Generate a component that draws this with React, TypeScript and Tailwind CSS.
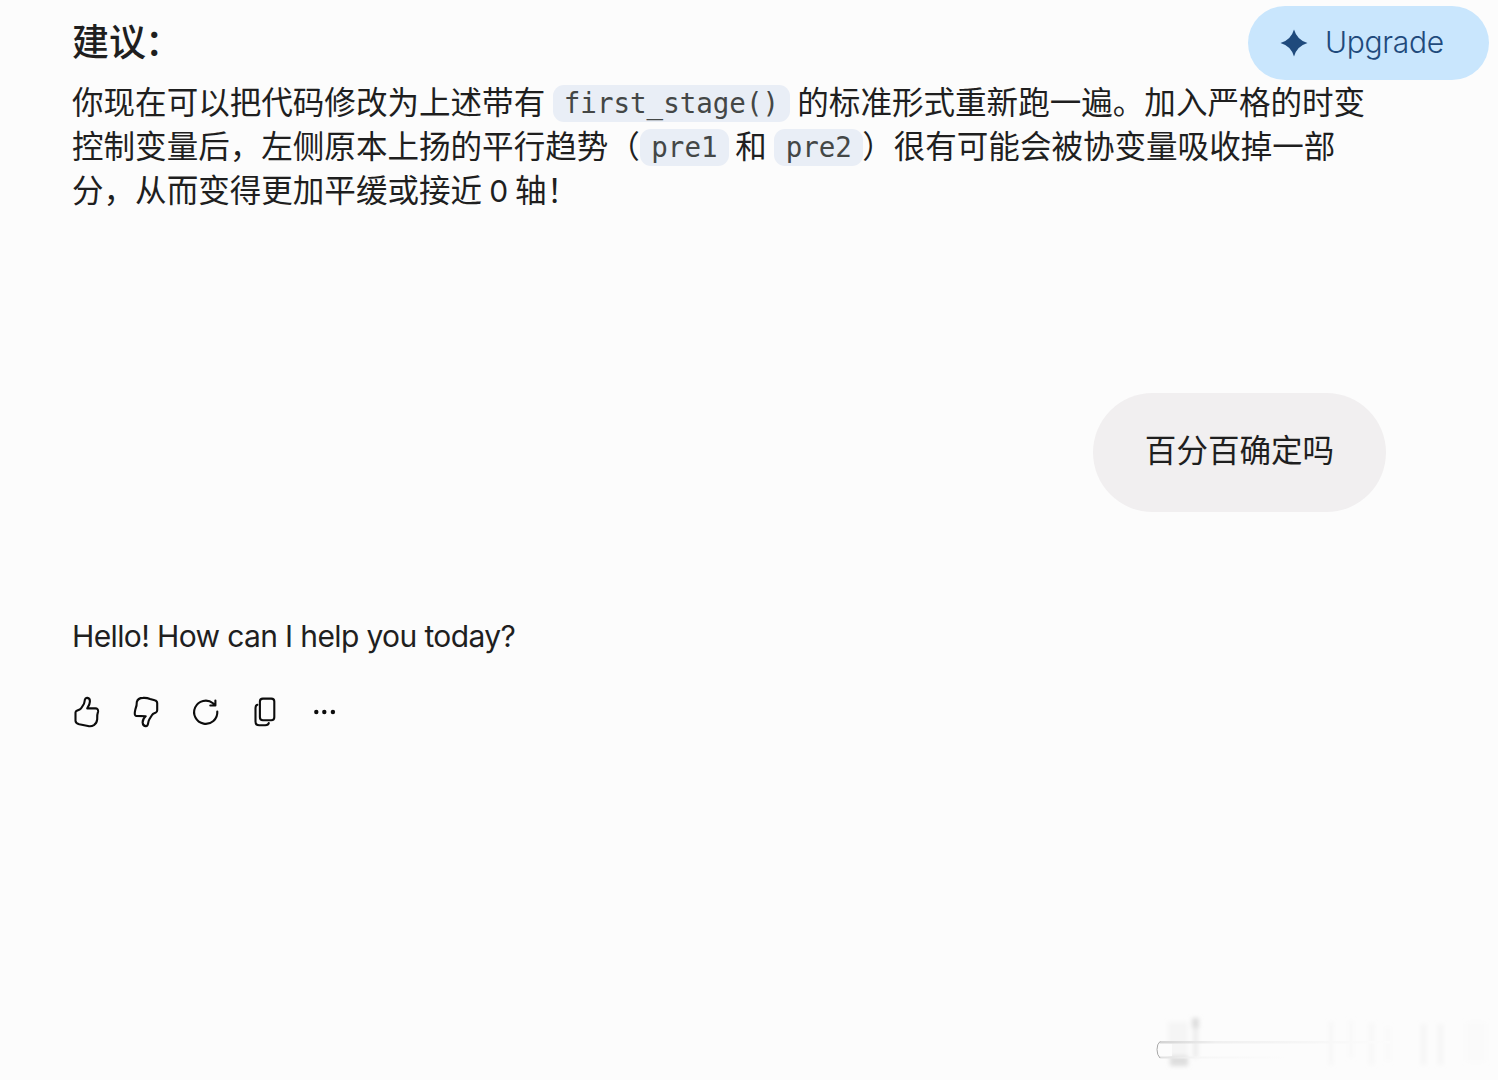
import type { ReactNode } from "react";

const Code = ({ children }: { children: ReactNode }) => (
  <code className="inline-flex h-[37px] shrink-0 items-center rounded-[11px] bg-[#e9eef6] px-[11.3px] pt-px font-['DejaVu_Sans_Mono',monospace] text-[27.5px] leading-none text-[#444746]">
    {children}
  </code>
);

const Line = ({ children }: { children: ReactNode }) => (
  <span className="flex h-[44.3px] items-center whitespace-nowrap">{children}</span>
);

const Text = ({ children, width = "" }: { children: ReactNode; width?: string }) => (
  <span className={`shrink-0 pb-[5px] ${width}`}>{children}</span>
);

const iconProps = {
  fill: "none",
  stroke: "#0c0c0c",
  strokeWidth: 2.1,
  strokeLinecap: "round" as const,
  strokeLinejoin: "round" as const,
};

const ThumbUp = () => (
  <svg width="30" height="34" viewBox="72 695 30 34" {...iconProps}>
    <path d="M75.5 712.5Q75.6 711.2 76.8 710.7L79.6 709.5Q80.8 708.9 81.5 707.8L83.7 704.2Q84.2 703.3 84.4 702.1L84.9 699.6Q85.4 697.7 87.3 697.9Q90.2 698.3 89.9 701.6Q89.8 704.8 87.2 708.4H95.4Q98.2 708.4 98.1 711.4Q96.9 714.8 97.2 719.4Q96.7 723.4 93.9 725.2Q91.1 726.8 88 726L79.2 724.3Q75.5 723.3 75.5 720.7Z" />
  </svg>
);

const ThumbDown = () => (
  <svg width="30" height="34" viewBox="131.6 695 30 34" {...iconProps}>
    <path d="M157.8 703.2Q157.8 700.8 155.3 700.2L150.7 698.9Q147.4 697.6 143.6 697.9Q138.4 698 137.4 702.1Q137.6 705 135.9 709.7Q134.4 715.4 136.7 715.9L146.3 716.2Q143.2 718.8 143.2 722.4Q143.5 726.2 146.5 726.1Q148.3 726 148.7 723.3Q149.1 720.7 150 719.2L152.8 714.8Q153.5 713.8 154.8 713.3L156.4 712.6Q157.8 712 157.8 710.3Z" />
  </svg>
);

const Redo = () => (
  <svg width="30" height="34" viewBox="191 695 30 34" {...iconProps}>
    <path d="M217.3 711.5A11.6 11.6 0 1 1 213 703.2L215.2 705.4M215.4 700.5V705.5H210.3" />
  </svg>
);

const Copy = () => (
  <svg width="30" height="34" viewBox="250.4 695 30 34" {...iconProps}>
    <rect x="260.3" y="698.6" width="14.4" height="21.6" rx="3" />
    <path d="M257.8 704.8Q255.9 705.4 255.9 708V721.4Q255.9 725.2 259.6 725.2H265.6Q268.8 725.2 269.2 723" />
  </svg>
);

const More = () => (
  <svg width="30" height="34" viewBox="309.9 695 30 34" fill="#0c0c0c">
    <circle cx="316.2" cy="712" r="2.2" />
    <circle cx="324.2" cy="712" r="2.2" />
    <circle cx="332.8" cy="712" r="2.2" />
  </svg>
);

const Smudge = () => (
  <svg className="absolute right-0 bottom-0" width="348" height="70" viewBox="1150 1010 348 70" fill="none">
    <defs>
      <linearGradient id="fade" x1="1158" x2="1390" y1="0" y2="0" gradientUnits="userSpaceOnUse">
        <stop stopColor="#d2d2d2" />
        <stop offset=".25" stopColor="#f0f0f0" />
        <stop offset="1" stopColor="#fcfcfc" />
      </linearGradient>
      <linearGradient id="fade-low" x1="1158" x2="1290" y1="0" y2="0" gradientUnits="userSpaceOnUse">
        <stop stopColor="#dedede" />
        <stop offset=".3" stopColor="#f6f6f6" />
        <stop offset="1" stopColor="#fcfcfc" />
      </linearGradient>
      <filter id="soft" x="-50%" y="-50%" width="200%" height="200%">
        <feGaussianBlur stdDeviation="2.2" />
      </filter>
    </defs>
    <g filter="url(#soft)">
      <rect x="1168" y="1022" width="20" height="38" fill="#f5f5f5" />
      <rect x="1192" y="1018" width="7" height="10" fill="#dedede" />
      <rect x="1193" y="1028" width="5" height="30" fill="#ececec" />
      <rect x="1170" y="1056" width="18" height="10" fill="#dedede" />
      <rect x="1329" y="1022" width="4" height="43" fill="#f6f6f6" />
      <rect x="1349" y="1020" width="4" height="38" fill="#f8f8f8" />
      <rect x="1369" y="1023" width="5" height="42" fill="#f7f7f7" />
      <rect x="1386" y="1026" width="4" height="36" fill="#f9f9f9" />
      <rect x="1421" y="1024" width="5" height="41" fill="#f5f5f5" />
      <rect x="1438" y="1024" width="5" height="41" fill="#f5f5f5" />
      <rect x="1466" y="1022" width="20" height="40" fill="#fafafa" />
    </g>
    <rect x="1160" y="1041" width="230" height="2.5" fill="url(#fade)" />
    <rect x="1160" y="1056.5" width="130" height="2" fill="url(#fade-low)" />
    <path d="M1160 1041.5Q1157 1044 1157 1049.5T1160 1058" stroke="#a8a8a8" />
    <path d="M1162 1044H1172V1056H1162Q1159 1050 1162 1044Z" fill="#fcfcfc" />
  </svg>
);

export default function App() {
  return (
    <main className="relative flex h-[1080px] w-[1498px] flex-col overflow-hidden bg-[#fcfcfc] pl-[72px] font-['Noto_Sans_CJK_SC',sans-serif] text-[31.55px] text-[#1f1f1f]">
      <h3 className="mt-[18px] flex h-[44px] items-center text-[37px] leading-none font-medium">
        建议<span className="-ml-px">：</span>
      </h3>
      <p className="mt-[19px] flex flex-col leading-none">
        <Line>
          <Text width="w-[480.5px]">你现在可以把代码修改为上述带有</Text>
          <Code>first_stage()</Code>
          <span className="ml-[7px] pb-[5px]">的标准形式重新跑一遍。加入严格的时变</span>
        </Line>
        <Line>
          <Text width="w-[568px]">控制变量后，左侧原本上扬的平行趋势（</Text>
          <Code>pre1</Code>
          <span className="ml-[6.5px] w-[39px] pb-[5px]">和</span>
          <Code>pre2</Code>
          <span className="-ml-px pb-[5px]">）很有可能会被协变量吸收掉一部</span>
        </Line>
        <Line>
          <Text>
            分，从而变得更加平缓或接近
            <span className="mx-[7px] inline-block w-[19px] text-center font-['Inter',sans-serif] text-[30px]">0</span>
            轴！
          </Text>
        </Line>
      </p>

      <div className="mt-[179px] mr-[112px] flex h-[119px] w-[293px] items-center justify-center self-end rounded-full bg-[#f1eff0] pb-[8px] leading-none">
        百分百确定吗
      </div>

      <p className="mt-[104px] flex h-[40px] items-center font-['Inter',sans-serif] text-[30px] leading-none tracking-[-0.63px] whitespace-nowrap">
        Hello! How can I help you today?
      </p>

      <div className="mt-[39px] flex items-center gap-[29.4px]">
        <ThumbUp />
        <ThumbDown />
        <Redo />
        <Copy />
        <More />
      </div>

      <button className="absolute top-[6px] left-[1248px] flex h-[74px] w-[241px] items-center rounded-full bg-[#c9e6fd] pl-[32px] font-['Inter',sans-serif] text-[30px] leading-none font-light tracking-[-0.3px] text-[#1f4a7c]">
        <svg width="28" height="28" viewBox="0 0 28 28" fill="currentColor">
          <path d="M14 .5Q17 11 27.5 14Q17 17 14 27.5Q11 17 .5 14Q11 11 14 .5Z" />
        </svg>
        <span className="ml-[17px] pb-[3px]">Upgrade</span>
      </button>

      <Smudge />
    </main>
  );
}
